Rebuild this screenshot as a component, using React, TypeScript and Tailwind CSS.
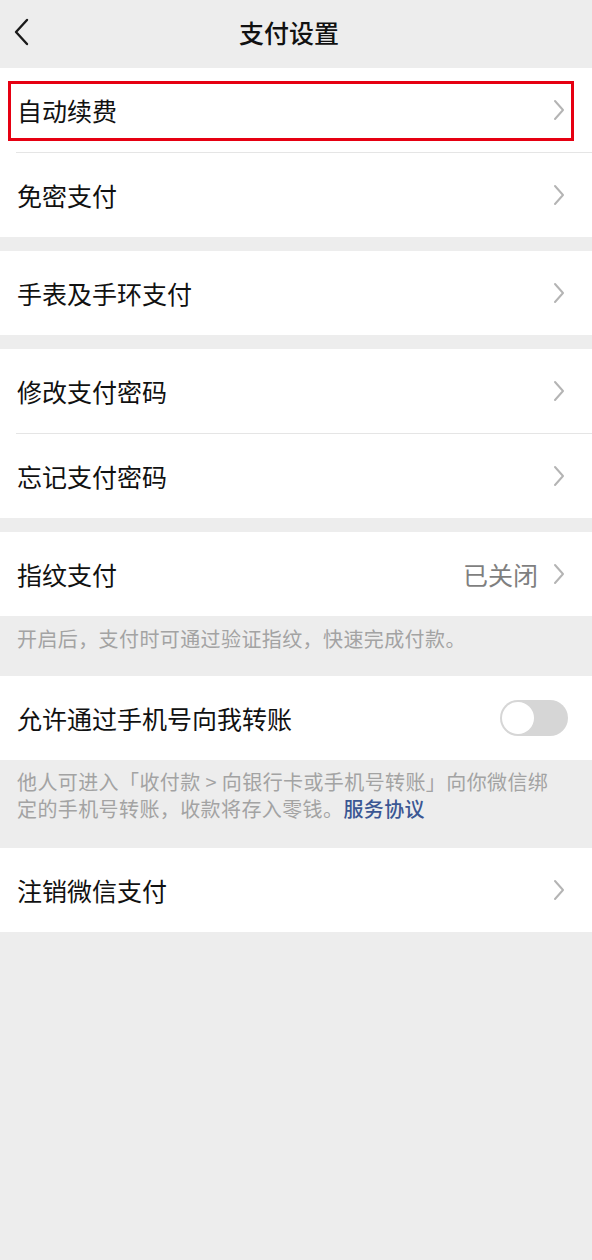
import React from 'react'

const font = { fontFamily: '"Noto Sans CJK SC", "Noto Sans", sans-serif' }

function Chevron() {
  return (
    <svg width="14" height="22" viewBox="0 0 14 22" className="shrink-0">
      <path d="M3 2 L11 11 L3 20" fill="none" stroke="#b4b4b4" strokeWidth="2" strokeLinecap="round" strokeLinejoin="round" />
    </svg>
  )
}

function Row({ label, value, divider, boxed }: { label: string; value?: string; divider?: boolean; boxed?: boolean }) {
  return (
    <div className="relative bg-white">
      <div className="h-[84px] flex items-center pl-[17px] pr-[26px]">
        <span className="flex-1 text-[25px] text-[#111] leading-none">{label}</span>
        {value && <span className="text-[25px] text-[#7f7f7f] leading-none mr-[14px]">{value}</span>}
        <Chevron />
      </div>
      {divider && <div className="ml-[16px] h-px bg-[#e5e5e5]" />}
      {boxed && <div className="absolute left-[8px] top-[13px] w-[566px] h-[60px] border-[3px] border-[#e60012]" />}
    </div>
  )
}

export default function App() {
  return (
    <div className="w-[592px] min-h-[1260px] bg-[#ededed]" style={font}>
      <div className="h-[68px] relative flex items-center justify-center">
        <svg width="16" height="28" viewBox="0 0 16 28" className="absolute left-[13px] top-[18px]">
          <path d="M14 2 L3 14 L14 26" fill="none" stroke="#1a1a1a" strokeWidth="2.4" strokeLinecap="round" strokeLinejoin="round" />
        </svg>
        <span className="text-[25px] font-medium text-[#111] leading-none mr-[14px] -mt-[4px]">支付设置</span>
      </div>

      <Row label="自动续费" divider boxed />
      <Row label="免密支付" />

      <div className="h-[14px]" />
      <Row label="手表及手环支付" />

      <div className="h-[14px]" />
      <Row label="修改支付密码" divider />
      <Row label="忘记支付密码" />

      <div className="h-[14px]" />
      <Row label="指纹支付" value="已关闭" />
      <div className="h-[60px] px-[17px] pt-[9px] text-[20px] tracking-[0.4px] text-[#a3a3a3] leading-[27px]">
        开启后，支付时可通过验证指纹，快速完成付款。
      </div>

      <div className="bg-white h-[84px] flex items-center pl-[17px] pr-[24px]">
        <span className="flex-1 text-[25px] text-[#111] leading-none">允许通过手机号向我转账</span>
        <div className="w-[68px] h-[36px] rounded-full bg-[#d6d6d6] p-[2px] flex items-center">
          <div className="w-[32px] h-[32px] rounded-full bg-white" />
        </div>
      </div>
      <div className="px-[17px] pt-[8px] pb-[26px] text-[20px] tracking-[0.4px] leading-[27px] text-[#a3a3a3] whitespace-nowrap">
        他人可进入「收付款 &gt; 向银行卡或手机号转账」向你微信绑
        <br />
        定的手机号转账，收款将存入零钱。
        <span className="text-[#3b5793] font-medium">服务协议</span>
      </div>

      <Row label="注销微信支付" />
    </div>
  )
}
